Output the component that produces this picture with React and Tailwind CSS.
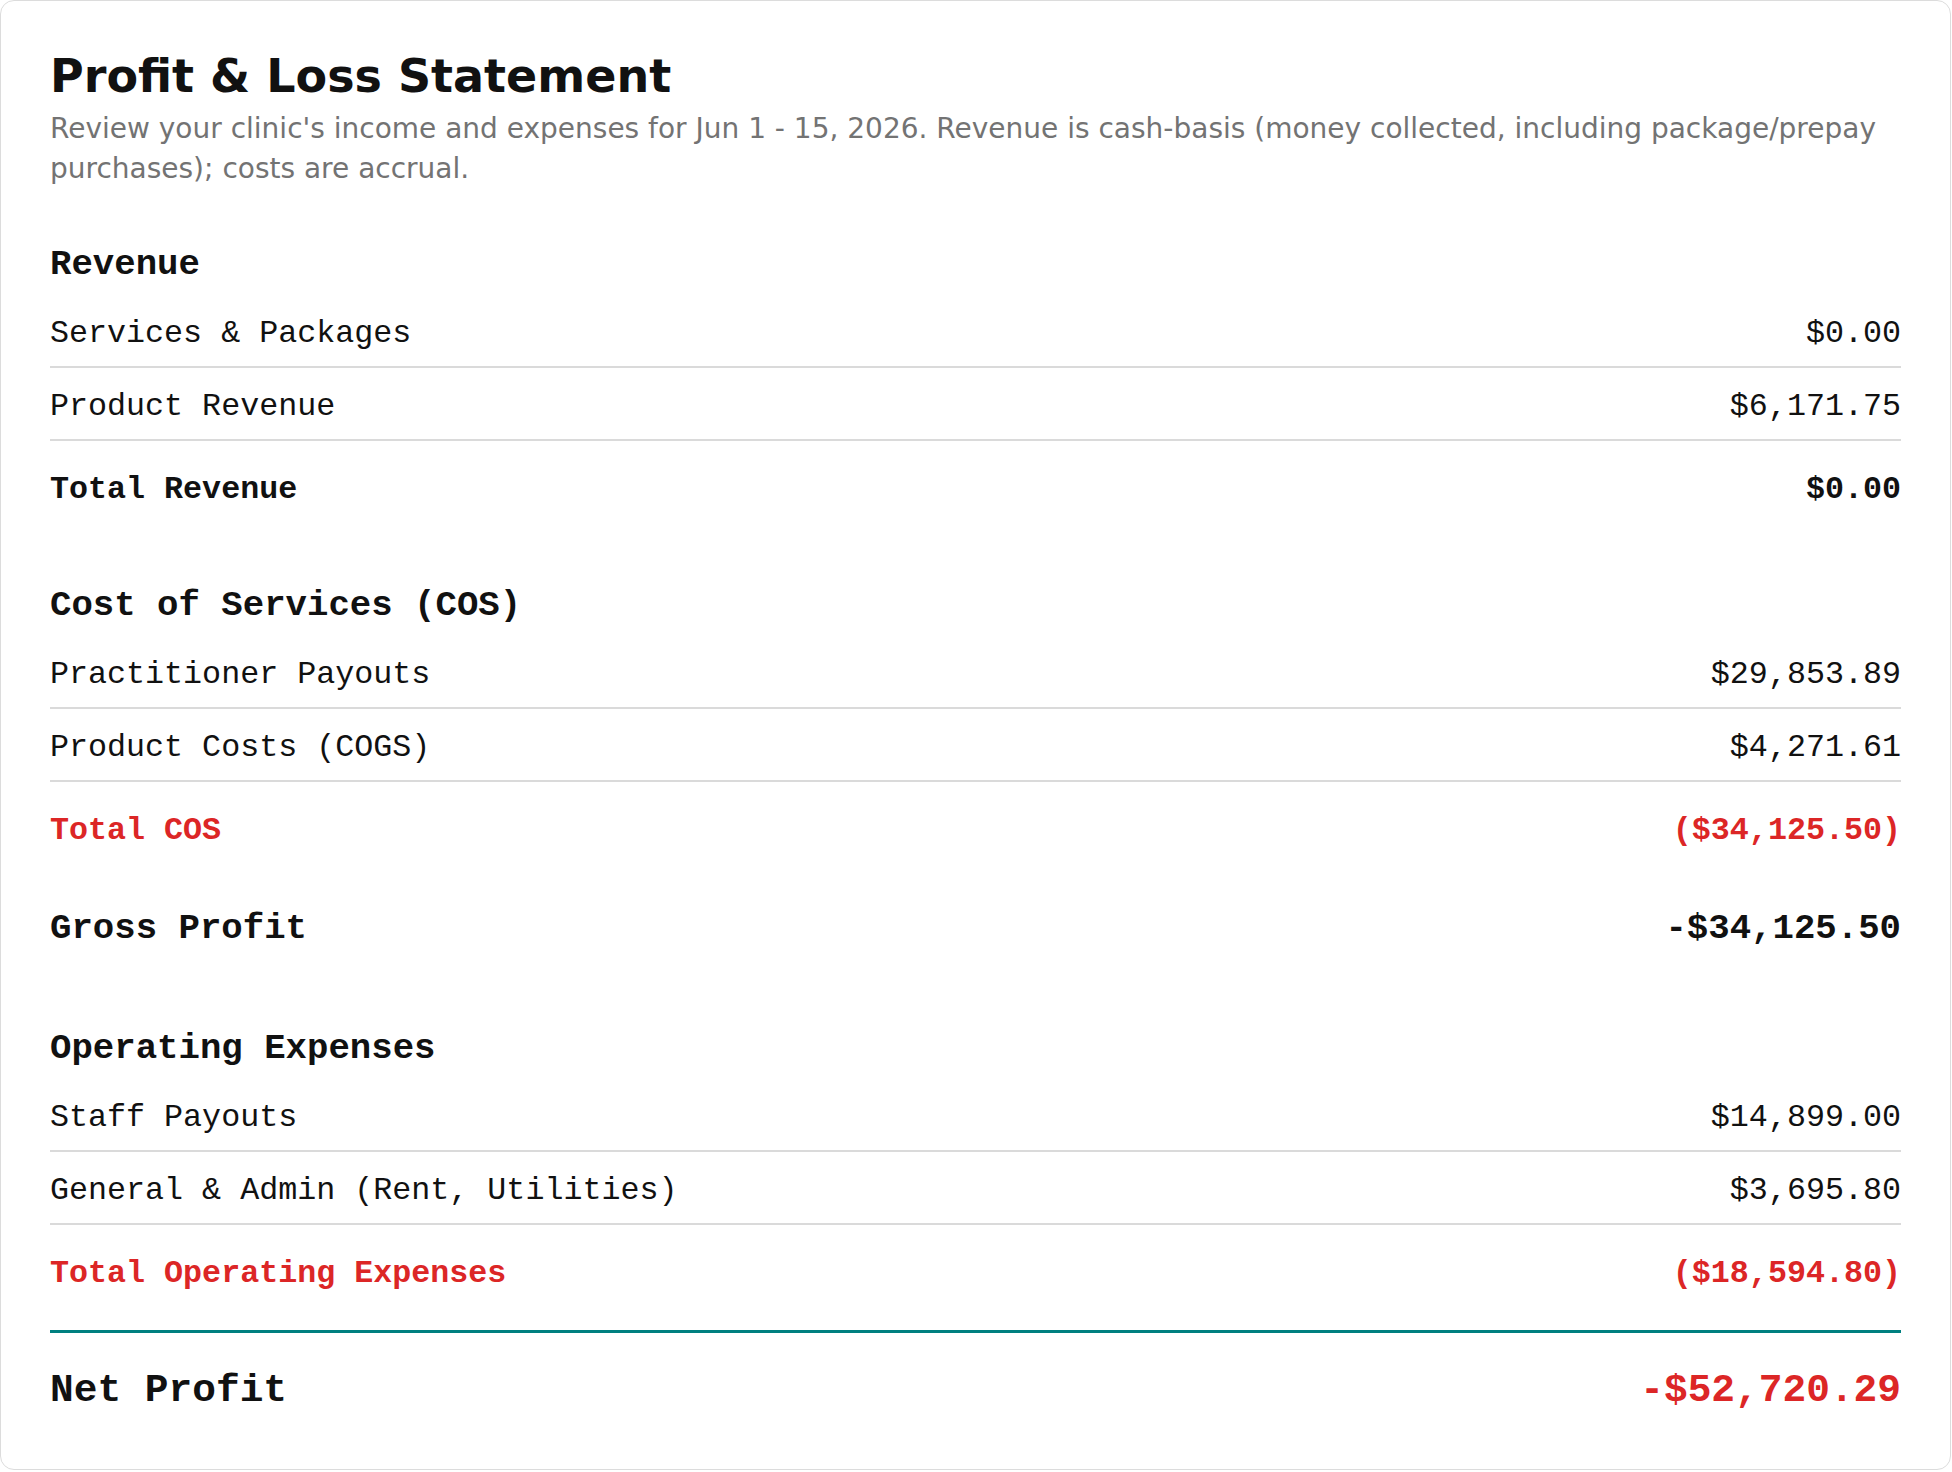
import React from "react";

const mono = "font-['Liberation_Mono',monospace]";

const sections = [
  {
    title: "Revenue",
    items: [
      { label: "Services & Packages", value: "$0.00" },
      { label: "Product Revenue", value: "$6,171.75" },
    ],
    total: { label: "Total Revenue", value: "$0.00", red: false },
  },
  {
    title: "Cost of Services (COS)",
    items: [
      { label: "Practitioner Payouts", value: "$29,853.89" },
      { label: "Product Costs (COGS)", value: "$4,271.61" },
    ],
    total: { label: "Total COS", value: "($34,125.50)", red: true },
    gross: { label: "Gross Profit", value: "-$34,125.50" },
  },
  {
    title: "Operating Expenses",
    items: [
      { label: "Staff Payouts", value: "$14,899.00" },
      { label: "General & Admin (Rent, Utilities)", value: "$3,695.80" },
    ],
    total: { label: "Total Operating Expenses", value: "($18,594.80)", red: true },
  },
];

const Section = ({ section, spacing }) => {
  return (
    <div className={spacing}>
      <h2 className="text-[35.7px] leading-[44px] font-bold text-[#111] mb-[8px]">{section.title}</h2>

      {section.items.map((item) => (
        <div
          key={item.label}
          className="flex justify-between pt-[19px] pb-[12px] border-b-2 border-[#dadada] text-[31.7px] leading-[40px] text-[#111]"
        >
          <span>{item.label}</span>
          <span>{item.value}</span>
        </div>
      ))}

      <div
        className={`flex justify-between pt-[29px] pb-[11px] text-[31.7px] leading-[40px] font-bold ${
          section.total.red ? "text-[#dc2626]" : "text-[#111]"
        }`}
      >
        <span>{section.total.label}</span>
        <span>{section.total.value}</span>
      </div>

      {section.gross && (
        <div className="flex justify-between mt-[45px] text-[35.7px] leading-[44px] font-bold text-[#111]">
          <span>{section.gross.label}</span>
          <span>{section.gross.value}</span>
        </div>
      )}
    </div>
  );
};

const App = () => {
  return (
    <div className="bg-white min-h-screen">
      <div className="w-[1951px] border border-[#dcdcdc] rounded-[14px] bg-white px-[49px] pt-[48px] pb-[21px]">
        <h1 className="font-['DejaVu_Sans',sans-serif] text-[46px] leading-[54px] font-bold text-[#111]">
          Profit &amp; Loss Statement
        </h1>
        <p className="mt-[6px] font-['DejaVu_Sans',sans-serif] text-[28px] leading-[40px] text-[#737373]">
          Review your clinic's income and expenses for Jun 1 - 15, 2026. Revenue is cash-basis (money collected,
          including package/prepay purchases); costs are accrual.
        </p>

        <div className={mono}>
          <Section section={sections[0]} spacing="mt-[54px]" />
          <Section section={sections[1]} spacing="mt-[63px]" />
          <Section section={sections[2]} spacing="mt-[76px]" />

          {/* net profit */}
          <div className="mt-[25px] border-t-[3px] border-[#008080] flex justify-between pt-[34px] pb-[33px] text-[39.5px] leading-[48px] font-bold">
            <span className="text-[#111]">Net Profit</span>
            <span className="text-[#dc2626]">-$52,720.29</span>
          </div>
        </div>
      </div>
    </div>
  );
};

export default App;
